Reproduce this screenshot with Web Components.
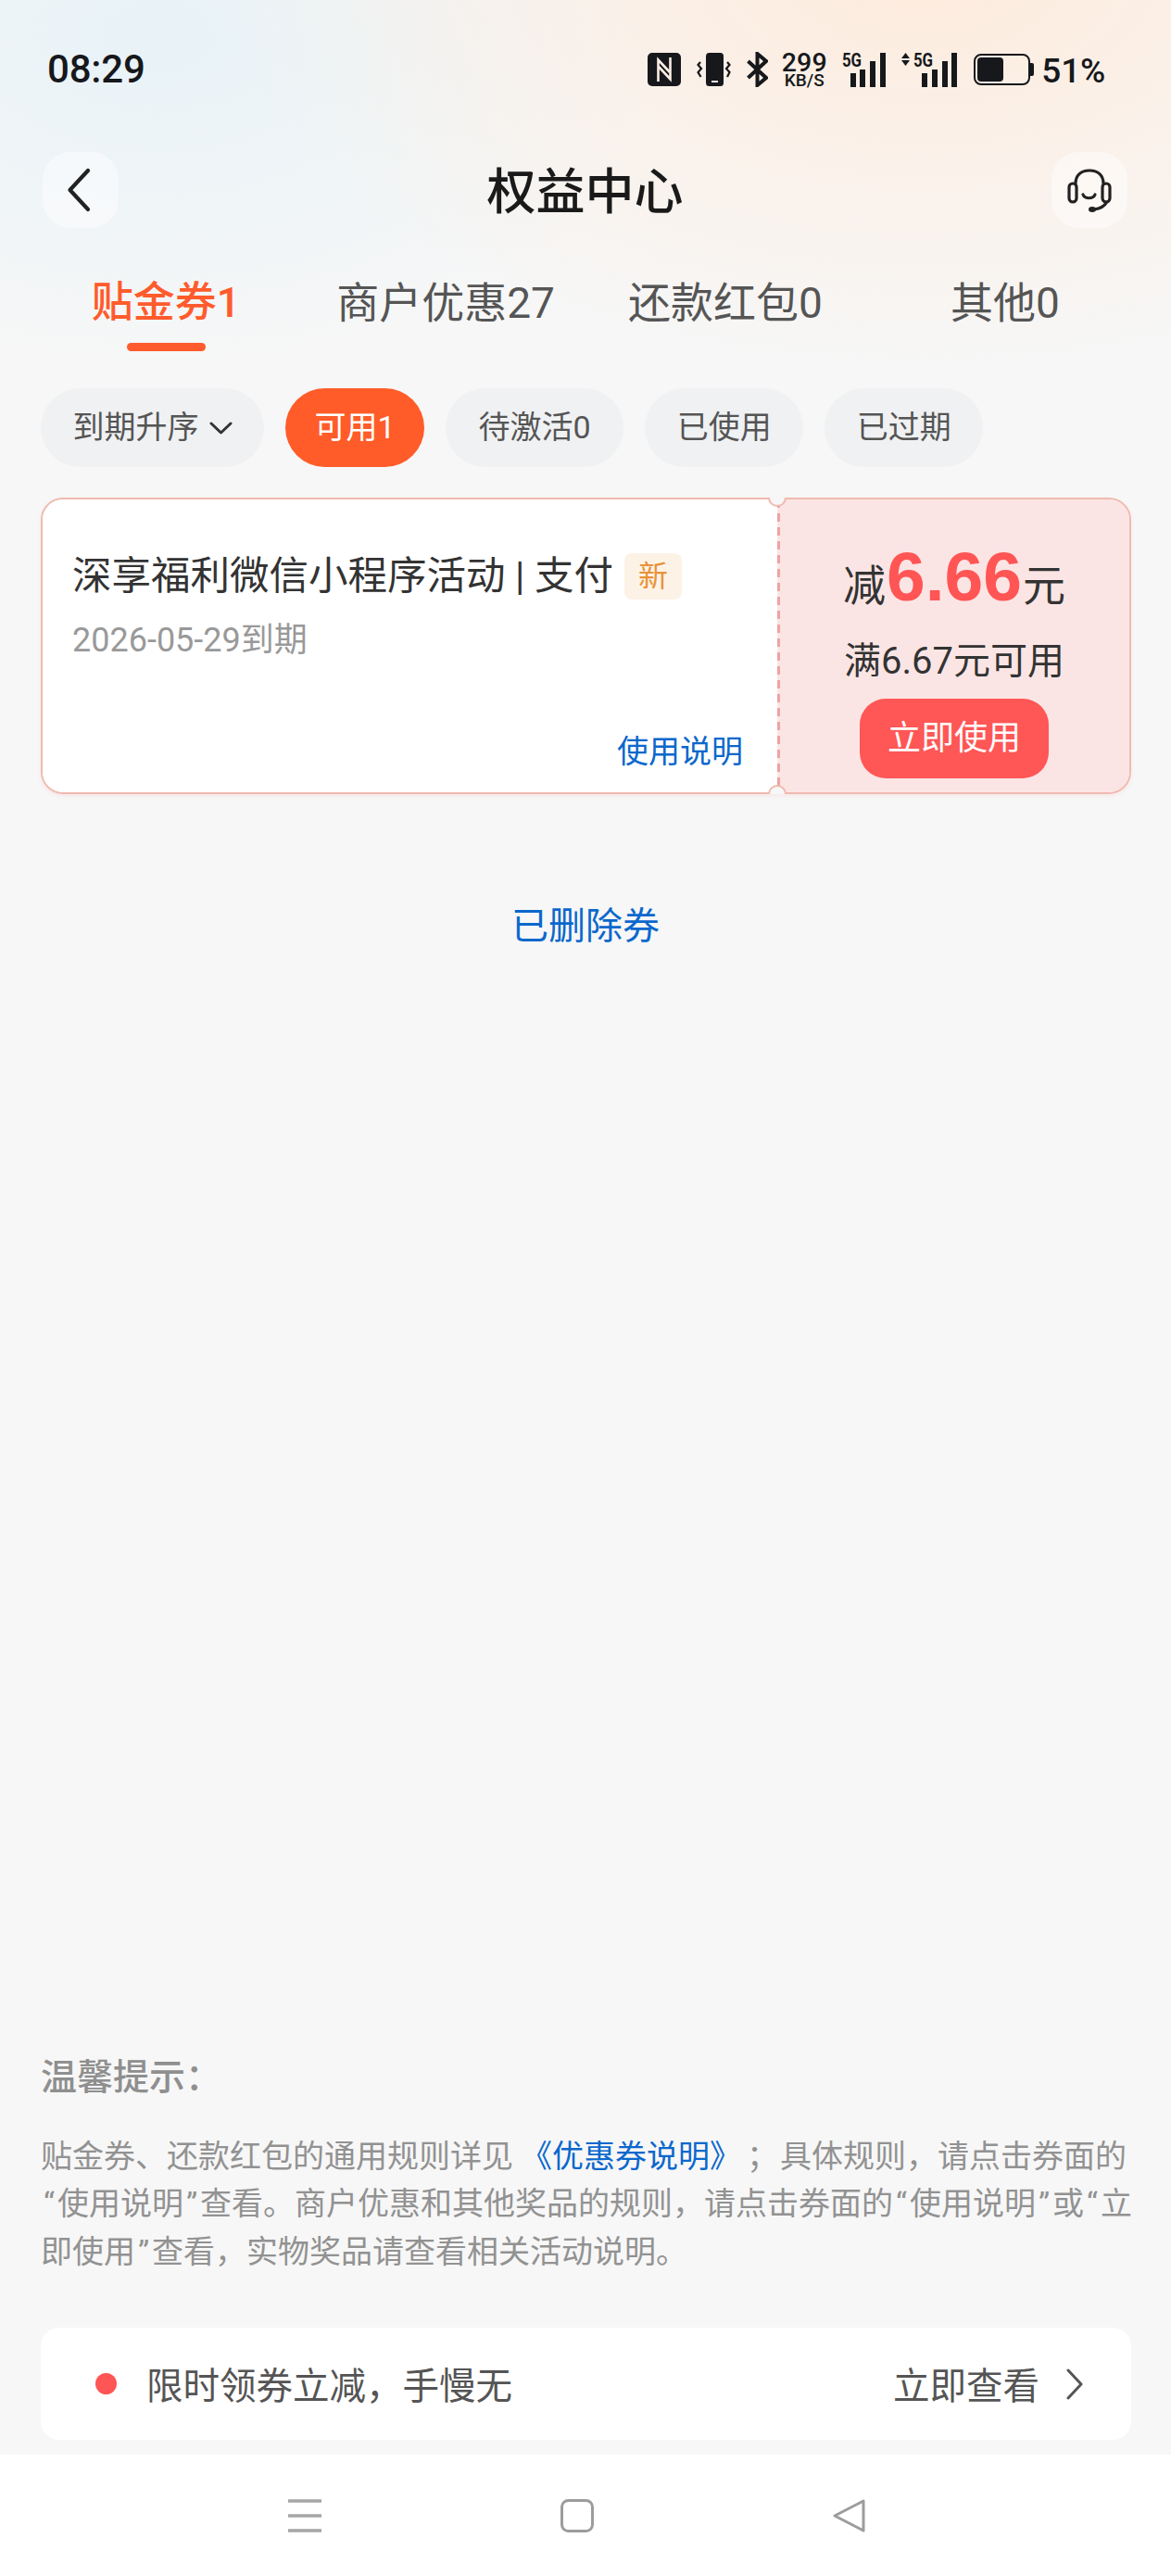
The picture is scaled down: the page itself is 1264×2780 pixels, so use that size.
<!DOCTYPE html>
<html lang="zh-CN">
<head>
<meta charset="utf-8">
<title>权益中心</title>
<style>
html,body{margin:0;padding:0;width:1264px;height:2780px;background:#f7f7f7;font-family:Roboto,"Noto Sans CJK SC",sans-serif;overflow:hidden}
</style>
</head>
<body>
<app-shell>
  <status-bar slot="top"></status-bar>
  <nav-header slot="top">权益中心</nav-header>
  <tab-row slot="top">
    <tab-item active>贴金券1</tab-item>
    <tab-item>商户优惠27</tab-item>
    <tab-item>还款红包0</tab-item>
    <tab-item>其他0</tab-item>
  </tab-row>
  <filter-row slot="top">
    <filter-chip caret>到期升序</filter-chip>
    <filter-chip active>可用1</filter-chip>
    <filter-chip wide>待激活0</filter-chip>
    <filter-chip>已使用</filter-chip>
    <filter-chip>已过期</filter-chip>
  </filter-row>
  <coupon-card slot="top"></coupon-card>
  <deleted-link slot="top">已删除券</deleted-link>
  <tips-block slot="bottom"></tips-block>
  <promo-banner slot="bottom"></promo-banner>
  <system-nav slot="nav"></system-nav>
</app-shell>
<script>
const FONT = 'Roboto,"Noto Sans CJK SC",sans-serif';
function def(name, html, init){
  customElements.define(name, class extends HTMLElement{
    constructor(){super();this.attachShadow({mode:'open'}).innerHTML=html;}
    connectedCallback(){ if(init) init(this); }
  });
}
def('app-shell',`<style>
:host{display:flex;flex-direction:column;width:1264px;height:2780px;position:relative;font-family:${FONT};
background:
 radial-gradient(760px 430px at 1000px -30px,rgba(255,232,214,.8),rgba(255,232,214,0) 100%),
 radial-gradient(560px 360px at 170px 40px,rgba(228,241,247,.8),rgba(228,241,247,0) 100%),
 #f7f7f7;}
.main{flex:1;display:flex;flex-direction:column;justify-content:space-between;min-height:0}
.top,.bottom{display:flex;flex-direction:column}
</style>
<div class="main"><div class="top"><slot name="top"></slot></div><div class="bottom"><slot name="bottom"></slot></div></div>
<slot name="nav"></slot>`);

def('status-bar',`<style>
:host{display:flex;align-items:center;justify-content:space-between;height:150px;padding:0 71px 0 51px;box-sizing:border-box;color:#16181c}
.t{font-size:42px;font-weight:500;line-height:1;letter-spacing:-.2px}
.r{display:flex;align-items:center;height:40px}
svg{display:block;flex:none}
.sp{display:flex;flex-direction:column;align-items:center;width:50px;margin-left:14px;font-weight:500;line-height:1}
.sp b{font-weight:500;font-size:28.500px;height:22px;line-height:22px;letter-spacing:.2px}
.sp i{font-style:normal;font-size:19px;height:15px;line-height:15px}
.sig{position:relative;width:47px;height:37px;margin-left:16px}
.sig.b{width:60px;margin-left:17px}
.sig span{position:absolute;left:0;top:-2px;font-size:21px;font-weight:700;line-height:20px;transform:scaleX(.8);transform-origin:0 0;letter-spacing:-.3px}
.sig.b span{left:13px}
.sig svg{position:absolute;left:0;top:0}
.pc{font-size:37px;font-weight:500;line-height:1;margin-left:8px;letter-spacing:-.2px;margin-top:3px}
</style>
<div class="t">08:29</div>
<div class="r">
<svg width="36" height="36" viewBox="0 0 36 36"><rect width="36" height="36" rx="5" fill="#16181c"/><path d="M11.500 31V7.500L24 21" fill="none" stroke="#fdeee4" stroke-width="2.600"/><path d="M24.500 5v23.500L12 15" fill="none" stroke="#fdeee4" stroke-width="2.600"/></svg>
<svg style="margin-left:17px" width="37" height="36" viewBox="0 0 37 36"><rect x="10" y="0" width="19" height="36" rx="3.500" fill="#16181c"/><rect x="16" y="30" width="7" height="2" fill="#fdeee4"/><path d="M4 10l-2.500 3L5 17l-3.500 4L4.500 26M33 10l2.500 3L32 17l3.500 4L33 26" fill="none" stroke="#16181c" stroke-width="2.200"/></svg>
<svg style="margin-left:17px" width="23" height="38" viewBox="0 0 23 38"><path d="M1.500 10L21 28 11.500 36V2L21 10 1.500 28" fill="none" stroke="#16181c" stroke-width="4" stroke-linejoin="miter"/></svg>
<div class="sp"><b>299</b><i>KB/S</i></div>
<div class="sig"><span>5G</span><svg width="47" height="37" viewBox="0 0 47 37"><path d="M9 22h6v15H9zM19 18h6v19h-6zM30 9h6v28h-6zM41 0h6v37h-6z" fill="#16181c"/></svg></div>
<div class="sig b"><span>5G</span><svg width="60" height="37" viewBox="0 0 60 37"><path d="M4.500 0L9 6H0zM4.500 14L0 8h9zM22 22h6v15h-6zM33 18h6v19h-6zM44 9h6v28h-6zM54 0h6v37h-6z" fill="#16181c"/></svg></div>
<svg style="margin-left:18px" width="65" height="34" viewBox="0 0 65 34"><rect x="1" y="1" width="59" height="32" rx="7" fill="none" stroke="#16181c" stroke-width="2"/><rect x="4" y="4" width="28" height="26" rx="4" fill="#16181c"/><path d="M61 10h2a2 2 0 0 1 2 2v10a2 2 0 0 1-2 2h-2z" fill="#16181c"/></svg>
<div class="pc">51%</div>
</div>`);

def('nav-header',`<style>
:host{display:flex;align-items:center;justify-content:space-between;height:82px;margin:14px 47px 0 46px;color:#1a1a1a}
.b{width:82px;height:82px;border-radius:30px;background:rgba(255,255,255,.45);display:flex;align-items:center;justify-content:center}
.w{font-size:53px;font-weight:500;line-height:82px;padding-top:5px}
svg{display:block}
</style>
<div class="b"><svg style="margin-left:-5px" width="28" height="48" viewBox="0 0 28 48"><path d="M24 3L4.500 24 24 45" fill="none" stroke="#222" stroke-width="4.200" stroke-linecap="round" stroke-linejoin="round"/></svg></div>
<div class="w"><slot></slot></div>
<div class="b"><svg width="48" height="48" viewBox="0 0 48 48"><g fill="none" stroke="#222" stroke-width="3.200" stroke-linecap="round"><path d="M9 17C9 8 15 3 24 3s15 5 15 14"/><rect x="2" y="17" width="8" height="20" rx="4"/><rect x="38" y="17" width="8" height="20" rx="4"/><path d="M17 29c2 5 11 5 13 0"/><path d="M42 38c-2 4-7 6-13 7"/></g><ellipse cx="27" cy="45" rx="4" ry="3" fill="#222"/></svg></div>`);

def('tab-row',`<style>:host{display:grid;grid-template-columns:repeat(4,302px);margin:0 0 0 28px;height:133px}</style><slot></slot>`);
def('tab-item',`<style>
:host{display:flex;flex-direction:column;align-items:center;font-size:46px;line-height:64px;color:#555;padding-top:49px;box-sizing:border-box;height:133px}
:host([active]){color:#ff5b2c;font-weight:500;font-size:45px}
.u{width:85px;height:9px;border-radius:5px;margin-top:11px;background:transparent}
:host([active]) .u{background:#ff5b2c}
</style><div><slot></slot></div><div class="u"></div>`);

def('filter-row',`<style>:host{display:flex;gap:23px;margin:40px 0 0 44px}</style><slot></slot>`);
def('filter-chip',`<style>
:host{display:flex;align-items:center;height:85px;padding:0 34.500px;border-radius:43px;background:#f0f1f3;color:#555;font-size:34px;line-height:85px;box-sizing:border-box}
:host([active]){background:#ff5c29;color:#fff;padding:0 31.500px}
:host([wide]){padding:0 35.500px}
svg{display:none;margin-left:11px;margin-right:0}
:host([caret]) svg{display:block}
</style><slot></slot><svg width="25" height="14" viewBox="0 0 25 14"><path d="M2 2l10.500 10L23 2" fill="none" stroke="#333" stroke-width="3" stroke-linecap="round" stroke-linejoin="round"/></svg>`);

def('coupon-card',`<style>
:host{display:flex;position:relative;width:1177px;height:320px;margin:33px 0 0 44px;box-sizing:border-box;border:2px solid #f0bab0;border-radius:24px;box-shadow:0 2px 4px rgba(255,160,160,.18)}
.l{width:793px;box-sizing:border-box;background:#fff;border-radius:22px 0 0 22px;padding:57px 0 0 32px;position:relative;color:#333}
.ti{display:flex;align-items:center;height:52px;font-size:42.500px;line-height:52px;white-space:pre}
.nw{margin-left:12px;width:62px;height:50px;border-radius:8px;background:#fdf2e6;color:#e8923a;font-size:32px;line-height:50px;text-align:center}
.d{font-size:36px;color:#999;line-height:44px;margin-top:21px}
.u{position:absolute;right:37px;bottom:22px;font-size:34px;line-height:44px;color:#0b68cc}
.r{flex:1;background:linear-gradient(#eda3a3 62%,transparent 0) left top/2.500px 15px repeat-y,#fbe5e4;border-radius:0 22px 22px 0;display:flex;flex-direction:column;align-items:center;color:#333;box-sizing:border-box;padding:47px 0 0 2px}
.a{display:flex;align-items:baseline;height:72px;line-height:72px;font-size:46px}
.a b{font-size:75px;color:#ff5555;font-weight:700;margin:0 1px;font-family:"Liberation Sans",Roboto,sans-serif}
.m{font-size:40px;line-height:50px;margin-top:31px}
.btn{width:204px;height:86px;margin-top:15px;border-radius:28px;background:#ff5656;color:#fff;font-size:36px;line-height:86px;text-align:center}
.n{position:absolute;left:783px;width:20px;height:20px;box-sizing:border-box;border:2px solid #f0bab0;border-radius:50%;background:#f7f7f7}
.n.t{top:-12px;clip-path:inset(50% 0 0 0)}
.n.b{bottom:-12px;clip-path:inset(0 0 50% 0)}
</style>
<div class="l">
<div class="ti"><span>深享福利微信小程序活动 | 支付</span><span class="nw">新</span></div>
<div class="d">2026-05-29到期</div>
<div class="u">使用说明</div>
</div>
<div class="r">
<div class="a"><span>减</span><b>6.66</b><span>元</span></div>
<div class="m">满6.67元可用</div>
<div class="btn">立即使用</div>
</div>
<i class="n t"></i><i class="n b"></i>`);

def('deleted-link',`<style>:host{display:block;margin-top:115px;text-align:center;font-size:40px;line-height:56px;color:#0b68cc}</style><slot></slot>`);

def('tips-block',`<style>
:host{display:block;margin:0 44px 0 44px;color:#929292;font-size:34px;text-spacing-trim:space-all}
.h{font-size:39px;font-weight:500;line-height:52px;color:#8f8f8f;margin-bottom:34px}
.l{display:block;line-height:51.500px;white-space:pre;height:51.500px}
a{color:#0b68cc;text-decoration:none;margin-left:8px}
.s{margin-left:6px}
.k{margin-left:2px}
.q{display:inline-block;width:18px;text-align:center}
</style>
<div class="h">温馨提示：</div>
<span class="l">贴金券、还款红包的通用规则详见<a>《优惠券说明》</a><span class="s">；</span><span class="k">具体规则，请点击券面的</span></span>
<span class="l"><span class="q">“</span>使用说明<span class="q">”</span>查看。商户优惠和其他奖品的规则，请点击券面的<span class="q">“</span>使用说明<span class="q">”</span>或<span class="q">“</span>立</span>
<span class="l">即使用<span class="q">”</span>查看，实物奖品请查看相关活动说明。</span>`);

def('promo-banner',`<style>
:host{display:flex;align-items:center;height:121px;margin:56px 43px 16px 44px;background:#fff;border-radius:20px;box-sizing:border-box;padding:0 52px 0 59px;color:#555;font-size:39.500px}
.dot{width:23px;height:23px;border-radius:50%;background:#ff5555;flex:none;margin-right:32px}
.s{flex:1}
.c{display:block;margin-left:29px}
.m{margin-top:-2px}
</style><i class="dot"></i><div class="s m">限时领券立减，手慢无</div><div class="m">立即查看</div><svg class="c" width="18" height="34" viewBox="0 0 18 34"><path d="M2 2l14 15L2 32" fill="none" stroke="#555" stroke-width="3" stroke-linecap="round" stroke-linejoin="round"/></svg>`);

def('system-nav',`<style>
:host{display:flex;height:131px;background:#fff;box-sizing:border-box;padding:48px 0 0 311px;gap:258px;align-items:flex-start}
svg{display:block}
</style>
<svg width="36" height="36" viewBox="0 0 36 36"><path d="M0 2h36M0 18h36M0 34h36" stroke="#a6a6a6" stroke-width="3.600"/></svg>
<svg width="36" height="36" viewBox="0 0 36 36"><rect x="1.500" y="1.500" width="33" height="33" rx="7" fill="none" stroke="#9c9c9c" stroke-width="3"/></svg>
<svg width="36" height="36" viewBox="0 0 36 36"><path d="M33 2L2 18l31 16z" fill="none" stroke="#9c9c9c" stroke-width="3" stroke-linejoin="round"/></svg>`);
</script>
</body>
</html>
